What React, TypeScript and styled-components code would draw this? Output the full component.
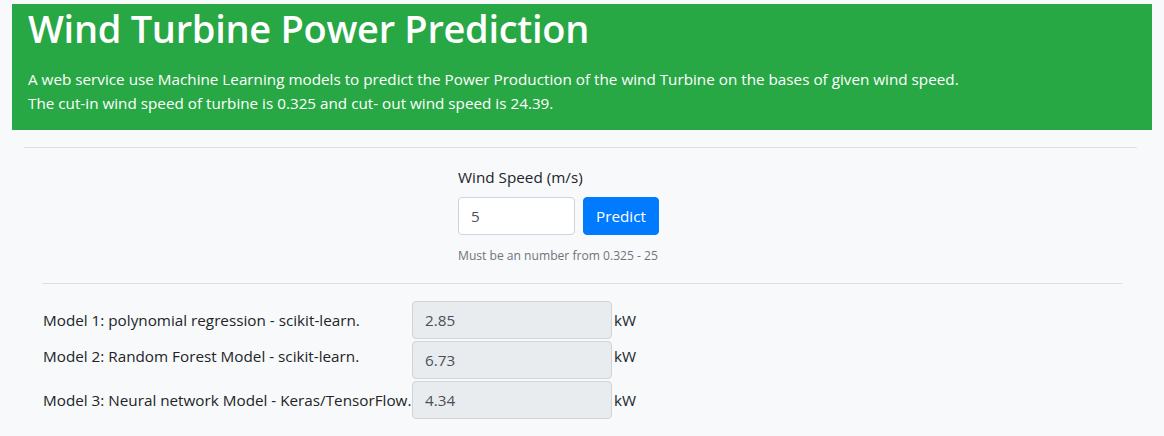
import React, { useState } from 'react';
import styled, { createGlobalStyle } from 'styled-components';

const GlobalStyle = createGlobalStyle`
  * { box-sizing: border-box; }
  body {
    margin: 0;
    background: #f8f9fa;
    color: #212529;
    font-family: "Open Sans", "Noto Sans", sans-serif;
    font-size: 15.25px;
    line-height: 1.5;
  }
`;

const Page = styled.div`
  padding-top: 4px;
  min-height: 436px;
`;

const Banner = styled.header`
  margin: 0 12px;
  padding: 0 16px 15px;
  background: #28a745;
  color: #fff;
`;

const Title = styled.h1`
  margin: 0 0 15px;
  font-size: 38px;
  font-weight: 600;
  letter-spacing: -0.3px;
  line-height: 48px;
`;

const Intro = styled.p`
  margin: 0;
  line-height: 24px;
`;

const Rule = styled.hr<{ $left: number; $right: number; $top?: number }>`
  border: 0;
  border-top: 1px solid rgba(0, 0, 0, 0.1);
  margin: ${({ $left, $right, $top = 0 }) => `${$top}px ${$right}px 0 ${$left}px`};
`;

const FormArea = styled.section`
  display: flex;
  justify-content: center;
  padding: 17px 0 18px;
`;

const FormBlock = styled.form`
  width: 248px;
  display: flex;
  flex-direction: column;
`;

const FieldLabel = styled.label`
  margin-bottom: 8px;
  line-height: 24px;
`;

const InputRow = styled.div`
  display: flex;
  gap: 8px;
`;

const TextInput = styled.input<{ $width: number; $readOnly?: boolean }>`
  width: ${({ $width }) => $width}px;
  height: 38px;
  padding: 6px 12px;
  font: inherit;
  color: #495057;
  background: ${({ $readOnly }) => ($readOnly ? '#e9ecef' : '#fff')};
  border: 1px solid #ced4da;
  border-radius: 4px;
  outline: none;
`;

const PrimaryButton = styled.button`
  height: 38px;
  padding: 6px 12px;
  font: inherit;
  color: #fff;
  background: #007bff;
  border: 1px solid #007bff;
  border-radius: 4px;
  cursor: pointer;
`;

const HelpText = styled.small`
  margin-top: 11px;
  font-size: 12.1px;
  line-height: 19px;
  color: #6c757d;
`;

const Results = styled.section`
  display: grid;
  grid-template-columns: 369px 200px auto;
  row-gap: 2px;
  padding: 17px 0 0 43px;
`;

const ModelLabel = styled.span<{ $lift?: boolean }>`
  align-self: center;
  white-space: nowrap;
  padding-bottom: ${({ $lift }) => ($lift ? '7px' : '0')};
`;

const Unit = styled.span<{ $lift?: boolean }>`
  align-self: center;
  padding: ${({ $lift }) => ($lift ? '0 0 7px 2px' : '0 0 0 2px')};
`;

const models = [
  { name: 'Model 1: polynomial regression - scikit-learn.', value: '2.85' },
  { name: 'Model 2: Random Forest Model - scikit-learn.', value: '6.73', lift: true },
  { name: 'Model 3: Neural network Model - Keras/TensorFlow.', value: '4.34' },
];

export default function App() {
  const [speed, setSpeed] = useState<string>('5');

  return (
    <>
      <GlobalStyle />
      <Page>
        <Banner>
          <Title>Wind Turbine Power Prediction</Title>
          <Intro>
            A web service use Machine Learning models to predict the Power Production of the wind Turbine on the bases of given wind speed.
            <br />
            The cut-in wind speed of turbine is 0.325 and cut- out wind speed is 24.39.
          </Intro>
        </Banner>
        <Rule $left={24} $right={27} $top={17} />
        <FormArea>
          <FormBlock onSubmit={(e) => e.preventDefault()}>
            <FieldLabel htmlFor="speed">Wind Speed (m/s)</FieldLabel>
            <InputRow>
              <TextInput
                id="speed"
                $width={117}
                value={speed}
                onChange={(e) => setSpeed(e.currentTarget.value)}
              />
              <PrimaryButton type="submit">Predict</PrimaryButton>
            </InputRow>
            <HelpText>Must be an number from 0.325 - 25</HelpText>
          </FormBlock>
        </FormArea>
        <Rule $left={42} $right={42} />
        <Results>
          {models.map((m) => (
            <React.Fragment key={m.name}>
              <ModelLabel $lift={m.lift}>{m.name}</ModelLabel>
              <TextInput $width={200} $readOnly readOnly value={m.value} />
              <Unit $lift={m.lift}>kW</Unit>
            </React.Fragment>
          ))}
        </Results>
      </Page>
    </>
  );
}
